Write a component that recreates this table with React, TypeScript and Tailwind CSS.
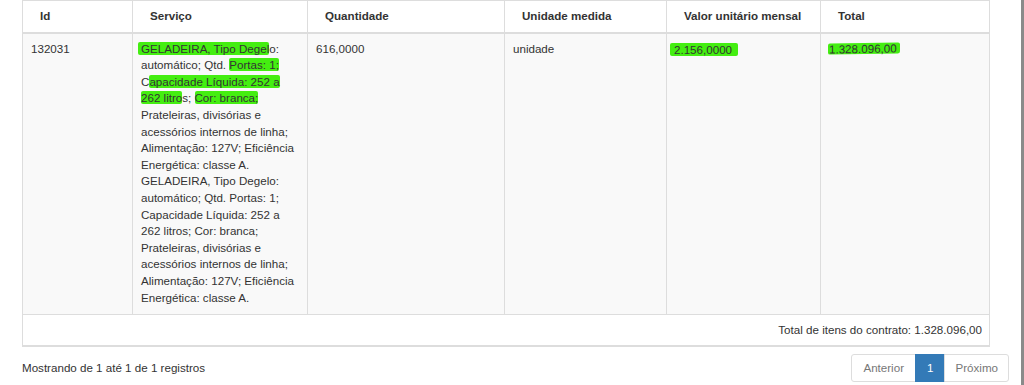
import React from "react";

const HL = ({ children, className = "" }: { children: React.ReactNode; className?: string }) => (
  <span className={"bg-[#44ee11] rounded-[2px] " + className}>{children}</span>
);

const servicoLines: React.ReactNode[] = [
  <>
    <HL className="-ml-[3px] pl-[3px]">GELADEIRA, Tipo Degel</HL>o:
  </>,
  <>
    automático; Qtd. <HL>Portas: 1;</HL>
  </>,
  <>
    C<HL>apacidade Líquida: 252 a</HL>
  </>,
  <>
    <HL>262 litro</HL>s; <HL>Cor: branca;</HL>
  </>,
  <>Prateleiras, divisórias e</>,
  <>acessórios internos de linha;</>,
  <>Alimentação: 127V; Eficiência</>,
  <>Energética: classe A.</>,
  <>GELADEIRA, Tipo Degelo:</>,
  <>automático; Qtd. Portas: 1;</>,
  <>Capacidade Líquida: 252 a</>,
  <>262 litros; Cor: branca;</>,
  <>Prateleiras, divisórias e</>,
  <>acessórios internos de linha;</>,
  <>Alimentação: 127V; Eficiência</>,
  <>Energética: classe A.</>,
];

export default function App() {
  const th = "text-left font-bold border-l border-[#ddd] first:border-l-0 pt-[7px] pb-[7px] pl-[17px] pr-2 align-bottom";
  const td = "align-top border-l border-[#ddd] first:border-l-0 pt-[7px] pb-[8px] px-2";
  return (
    <div
      className="w-[1024px] h-[385px] bg-white flex overflow-hidden text-[#333] text-[11.6px] leading-[16.6px]"
      style={{ fontFamily: '"Liberation Sans", Arial, Helvetica, sans-serif' }}
    >
      <div className="pl-[22px] w-[1009px] flex flex-col">
        <table className="table-fixed border-collapse w-[967px] border border-[#ddd]">
          <colgroup>
            <col className="w-[110px]" />
            <col className="w-[175px]" />
            <col className="w-[197px]" />
            <col className="w-[162px]" />
            <col className="w-[154px]" />
            <col className="w-[169px]" />
          </colgroup>
          <thead>
            <tr className="bg-white border-b-2 border-[#ddd]">
              <th className={th}>Id</th>
              <th className={th}>Serviço</th>
              <th className={th}>Quantidade</th>
              <th className={th}>Unidade medida</th>
              <th className={th}>Valor unitário mensal</th>
              <th className={th}>Total</th>
            </tr>
          </thead>
          <tbody>
            <tr className="bg-[#f9f9f9]">
              <td className={td}>132031</td>
              <td className={td}>
                {servicoLines.map((l, i) => (
                  <div key={i} className="whitespace-nowrap">
                    {l}
                  </div>
                ))}
              </td>
              <td className={td}>616,0000</td>
              <td className={td}>unidade</td>
              <td className={td}>
                <HL className="-ml-[5px] pl-[4px] pr-[6px] inline-block leading-[13px] mt-[2px]">2.156,0000</HL>
              </td>
              <td className={td}>
                <HL className="-ml-[1px] pl-[1px] pr-[3px] inline-block leading-[11px] -skew-y-1">1.328.096,00</HL>
              </td>
            </tr>
          </tbody>
          <tfoot>
            <tr className="bg-white border-t border-[#ddd] border-b-2">
              <td colSpan={6} className="text-right pt-[7px] pb-[6px] pr-[7px]">
                Total de itens do contrato: 1.328.096,00
              </td>
            </tr>
          </tfoot>
        </table>
        <div className="flex items-start justify-between mt-[7px]">
          <div className="pt-[6px]">Mostrando de 1 até 1 de 1 registros</div>
          <div className="flex">
            <span className="border border-[#ddd] rounded-l-[3px] px-[11px] py-[5px] text-[#777] bg-white">Anterior</span>
            <span className="border border-[#337ab7] bg-[#337ab7] text-white px-[11px] py-[5px] -ml-px">1</span>
            <span className="border border-[#ddd] rounded-r-[3px] px-[10px] py-[5px] text-[#777] bg-white -ml-px">Próximo</span>
          </div>
        </div>
      </div>
      <div className="flex-1" />
      <div className="w-[3px] h-full bg-[#8a8a8a]" />
    </div>
  );
}
